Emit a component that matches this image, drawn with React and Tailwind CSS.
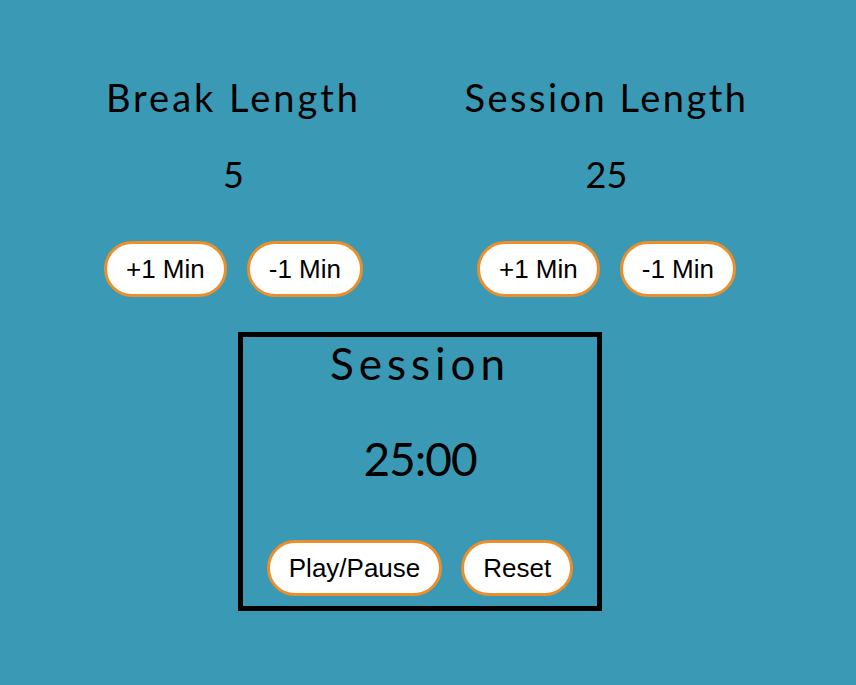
export default function App() {
  const btn =
    "bg-white border-[3px] border-[#ec8f2b] rounded-full text-black text-[26px] leading-[30px] px-[19px] py-[10px] font-['Liberation_Sans',Arial,sans-serif]";
  const head = "font-['Lato',sans-serif] text-black";
  return (
    <div className="w-full min-h-screen bg-[#3a9ab5]">
      <div className="w-[840px] flex flex-col items-center pt-[72px]">
        <div className="flex gap-[73px]">
          <div className="w-[300px] flex flex-col items-center">
            <h2 className={`${head} text-[38px] leading-[50px] tracking-[3px]`}>Break Length</h2>
            <div className={`${head} text-[36px] leading-[44px] mt-[30px]`}>5</div>
            <div className="flex gap-[20px] mt-[45px]">
              <button className={btn}>+1 Min</button>
              <button className={btn}>-1 Min</button>
            </div>
          </div>
          <div className="w-[300px] flex flex-col items-center">
            <h2 className={`${head} text-[38px] leading-[50px] tracking-[2.5px]`}>Session Length</h2>
            <div className={`${head} text-[36px] leading-[44px] mt-[30px]`}>25</div>
            <div className="flex gap-[20px] mt-[45px]">
              <button className={btn}>+1 Min</button>
              <button className={btn}>-1 Min</button>
            </div>
          </div>
        </div>
        <div className="mt-[35px] w-[364px] h-[279px] border-[5px] border-black flex flex-col items-center">
          <div className={`${head} text-[44px] leading-[52px] tracking-[5px]`}>Session</div>
          <div className={`${head} text-[46px] leading-[56px] tracking-[-1px] mt-[42px]`}>25:00</div>
          <div className="flex gap-[19px] mt-[53px]">
            <button className={btn}>Play/Pause</button>
            <button className={btn}>Reset</button>
          </div>
        </div>
      </div>
    </div>
  );
}
